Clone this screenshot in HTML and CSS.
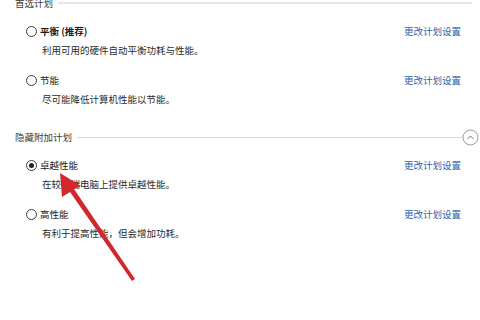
FILE: index.html
```html
<!DOCTYPE html>
<html lang="zh-CN">
<head>
<meta charset="utf-8">
<link rel="stylesheet" href="styles.css">
</head>
<body>
<div class="panel">
  <div class="group-head first">
    <span class="group-title">首选计划</span>
    <span class="rule"></span>
  </div>
  <div class="plans">
    <div class="plan">
      <div class="plan-row">
        <span class="radio"></span>
        <span class="plan-name bold">平衡 (推荐)</span>
        <a class="link">更改计划设置</a>
      </div>
      <div class="plan-desc">利用可用的硬件自动平衡功耗与性能。</div>
    </div>
    <div class="plan">
      <div class="plan-row">
        <span class="radio"></span>
        <span class="plan-name">节能</span>
        <a class="link">更改计划设置</a>
      </div>
      <div class="plan-desc">尽可能降低计算机性能以节能。</div>
    </div>
  </div>
  <div class="group-head second">
    <span class="group-title">隐藏附加计划</span>
    <span class="rule thin"></span>
    <span class="toggle">
      <svg width="17" height="17" viewBox="0 0 17 17"><circle cx="8.5" cy="8.5" r="7.5" fill="none" stroke="#9a9a9a" stroke-width="1"/><path d="M5.6 10 L8.5 7 L11.4 10" fill="none" stroke="#777" stroke-width="1"/></svg>
    </span>
  </div>
  <div class="plans">
    <div class="plan">
      <div class="plan-row">
        <span class="radio checked"></span>
        <span class="plan-name">卓越性能</span>
        <a class="link">更改计划设置</a>
      </div>
      <div class="plan-desc">在较高端电脑上提供卓越性能。</div>
    </div>
    <div class="plan">
      <div class="plan-row">
        <span class="radio"></span>
        <span class="plan-name">高性能</span>
        <a class="link">更改计划设置</a>
      </div>
      <div class="plan-desc">有利于提高性能，但会增加功耗。</div>
    </div>
  </div>
</div>
<svg class="arrow" width="480" height="320" viewBox="0 0 480 320">
  <polygon points="60,173 62,197 70,192 132,281 135,279 74,189 81,186" fill="#d3282b"/>
</svg>
</body>
</html>
```

FILE: styles.css
```css
html, body {
  margin: 0;
  padding: 0;
  background: #ffffff;
}
body {
  width: 480px;
  height: 320px;
  overflow: hidden;
  position: relative;
  font-family: "Noto Sans CJK SC", "Noto Sans", sans-serif;
  font-size: 9.5px;
  color: #222;
}
.panel {
  display: flex;
  flex-direction: column;
  padding: 0 8px 0 15px;
}
.group-head {
  display: flex;
  align-items: center;
  height: 12px;
  line-height: 12px;
}
.group-head.first {
  margin-top: -3px;
}
.group-head.second {
  margin-top: 26px;
  padding-right: 0;
}
.group-title {
  color: #3a3a3a;
  white-space: nowrap;
}
.rule {
  flex: 1;
  height: 2px;
  background: #e6e6e6;
  margin-left: 5px;
}
.rule.thin {
  height: 1px;
  background: #d9d9d9;
}
.toggle {
  display: flex;
  width: 17px;
  height: 17px;
  margin-right: -7px;
}
.plans {
  display: flex;
  flex-direction: column;
  gap: 18px;
  padding: 16px 11px 0 11px;
}
.plan {
  display: flex;
  flex-direction: column;
}
.plan-row {
  display: flex;
  align-items: center;
  height: 12px;
  line-height: 12px;
}
.radio {
  width: 11px;
  height: 11px;
  box-sizing: border-box;
  border: 1px solid #3c3c3c;
  border-radius: 50%;
  margin-right: 3px;
  display: flex;
  align-items: center;
  justify-content: center;
}
.radio.checked::after {
  content: "";
  width: 5px;
  height: 5px;
  border-radius: 50%;
  background: #222;
}
.plan-name {
  color: #1c1c1c;
}
.plan-name.bold {
  font-weight: bold;
}
.link {
  margin-left: auto;
  color: #2a5fae;
  text-decoration: none;
}
.plan-desc {
  margin-top: 7px;
  padding-left: 16px;
  line-height: 12px;
  color: #2b2b2b;
}
.arrow {
  position: absolute;
  left: 0;
  top: 0;
  pointer-events: none;
}
```
